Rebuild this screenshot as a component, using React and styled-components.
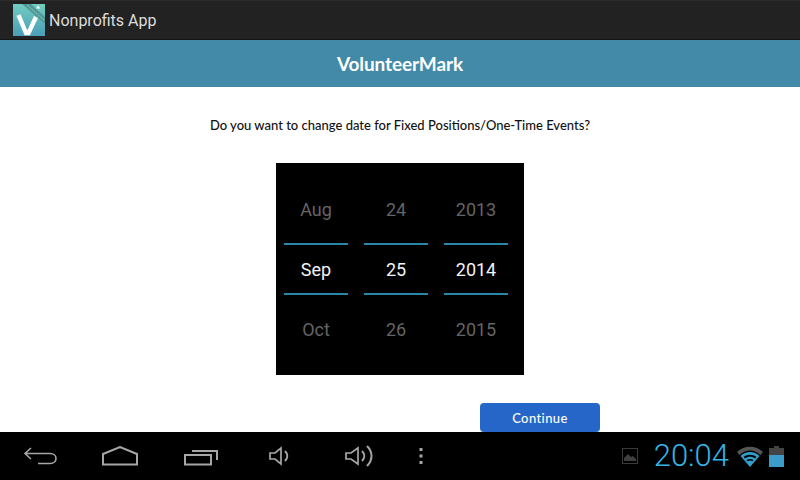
import React from "react";
import styled, { createGlobalStyle } from "styled-components";

const GlobalStyle = createGlobalStyle`
  html, body { margin: 0; padding: 0; background: #fff; }
  body { font-family: "Roboto", "Liberation Sans", sans-serif; }
`;

const Screen = styled.div`
  width: 800px;
  height: 480px;
  display: flex;
  flex-direction: column;
  overflow: hidden;
`;

const ActionBar = styled.div`
  height: 40px;
  box-sizing: border-box;
  background: #222222;
  border-top: 1px solid #2b2b2b;
  border-bottom: 1px solid #141414;
  padding-left: 13px;
  display: flex;
  align-items: center;
  gap: 4px;
  color: #dcdcdc;
  font-size: 16px;
`;

const Header = styled.div`
  height: 47px;
  background: #428aa8;
  color: #fff;
  font-family: "Lato", sans-serif;
  font-weight: 700;
  font-size: 19px;
  letter-spacing: -0.1px;
  display: flex;
  align-items: center;
  justify-content: center;
`;

const Content = styled.div`
  height: 345px;
  background: #fff;
  display: flex;
  flex-direction: column;
  align-items: center;
`;

const Question = styled.div`
  margin-top: 29px;
  height: 18px;
  line-height: 18px;
  color: #111;
  font-family: "Lato", sans-serif;
  font-weight: 500;
  font-size: 13px;
`;

const Picker = styled.div`
  margin-top: 29px;
  width: 248px;
  height: 212px;
  box-sizing: border-box;
  padding-right: 8px;
  background: #000;
  display: flex;
  justify-content: center;
  gap: 16px;
`;

const Column = styled.div`
  width: 64px;
  padding-top: 16px;
  display: flex;
  flex-direction: column;
`;

const Cell = styled.div`
  height: 60px;
  display: flex;
  align-items: center;
  justify-content: center;
  font-size: 18px;
  color: ${(p) => (p.$current ? "#f4f4f4" : "#646464")};
  ${(p) =>
    p.$current &&
    `
    height: 52px;
    margin: 4px 0;
    border-top: 2px solid #2a86ab;
    border-bottom: 2px solid #2a86ab;
    box-sizing: border-box;
  `}
`;

const ButtonRow = styled.div`
  margin-top: 28px;
  width: 100%;
  padding-left: 480px;
  box-sizing: border-box;
`;

const ContinueButton = styled.button`
  width: 120px;
  height: 29px;
  padding: 0;
  border: none;
  border-radius: 4px;
  background: #2566c8;
  color: #fff;
  font-family: "Lato", sans-serif;
  font-weight: 500;
  font-size: 13px;
  letter-spacing: 0.4px;
`;

const NavBar = styled.div`
  height: 48px;
  background: #000;
  display: flex;
  align-items: center;
  color: #a6a6a6;
`;

const NavIcon = styled.svg`
  flex: none;
  margin-left: ${(p) => p.$left}px;
  fill: none;
  stroke: currentColor;
  stroke-width: 2;
`;

const StatusArea = styled.div`
  margin-left: auto;
  display: flex;
  align-items: center;
  padding-right: 16px;
`;

const Clock = styled.div`
  margin-left: 16px;
  margin-right: 8px;
  font-size: 31px;
  font-weight: 300;
  color: #33b5e5;
  line-height: 48px;
`;

const WifiIcon = styled.svg`
  flex: none;
`;

const BatteryIcon = styled.svg`
  flex: none;
  margin-left: 6px;
`;

const AppLogo = () => (
  <svg width="32" height="32" viewBox="0 0 32 32">
    <defs>
      <linearGradient id="logoBg" x1="0" y1="0" x2="0" y2="1">
        <stop offset="0" stopColor="#72cdbf" />
        <stop offset="1" stopColor="#4a9db8" />
      </linearGradient>
    </defs>
    <rect width="32" height="32" fill="url(#logoBg)" />
    <path d="M9 0 L18 0 L32 13 L32 20 Z" fill="#4f9a97" />
    <path d="M14 1 L31 16" stroke="#cfeee8" strokeOpacity="0.6" strokeWidth="1" strokeDasharray="2 1" />
    <path d="M25 1.5 L27.5 4.5 L23 4.5 Z" fill="#fff" />
    <path d="M5.5 11 L13 29 L15.5 29 L23 13" fill="none" stroke="#fff" strokeWidth="4.4" />
  </svg>
);

const pickerColumns = [
  ["Aug", "Sep", "Oct"],
  ["24", "25", "26"],
  ["2013", "2014", "2015"],
];

export default function App() {
  return (
    <Screen>
      <GlobalStyle />
      <ActionBar>
        <AppLogo />
        <span>Nonprofits App</span>
      </ActionBar>
      <Header>VolunteerMark</Header>
      <Content>
        <Question>Do you want to change date for Fixed Positions/One-Time Events?</Question>
        <Picker>
          {pickerColumns.map((col) => (
            <Column key={col[1]}>
              {col.map((val, i) => (
                <Cell key={val} $current={i === 1}>
                  {val}
                </Cell>
              ))}
            </Column>
          ))}
        </Picker>
        <ButtonRow>
          <ContinueButton>Continue</ContinueButton>
        </ButtonRow>
      </Content>
      <NavBar>
        <NavIcon $left={23} width="34" height="20" viewBox="0 0 34 20">
          <path d="M8 2 L2 7.5 L8 13 M2 7.5 H27 C35 7.5 35 17.5 27 17.5 H15" strokeWidth="1.6" />
        </NavIcon>
        <NavIcon $left={45} width="36" height="20" viewBox="0 0 36 20">
          <path d="M1 8 L18 1 L35 8 V18.5 H1 Z" />
        </NavIcon>
        <NavIcon $left={46} width="34" height="20" viewBox="0 0 34 20">
          <path d="M1 9 H27 V18.5 H1 Z" />
          <path d="M8 5 H33 V14" />
        </NavIcon>
        <NavIcon $left={51} width="22" height="20" viewBox="0 0 22 20">
          <path d="M1 7 H6 L12 2 V18 L6 13 H1 Z" strokeWidth="1.7" />
          <path d="M16 5 C19 8 19 12 16 15" />
        </NavIcon>
        <NavIcon $left={54} width="30" height="24" viewBox="0 0 30 24">
          <path d="M1 9 H6 L13 4 V20 L6 15 H1 Z" strokeWidth="1.7" />
          <path d="M17 7 C20 10 20 14 17 17" />
          <path d="M22 2 C28 8 28 16 22 22" />
        </NavIcon>
        <NavIcon $left={44} width="4" height="16" viewBox="0 0 4 16">
          <path d="M0.5 1.5 H3.5 M0.5 8 H3.5 M0.5 14.5 H3.5" strokeWidth="3" />
        </NavIcon>
        <StatusArea>
          <svg width="16" height="16" viewBox="0 0 16 16">
            <rect x="0.5" y="0.5" width="15" height="15" fill="none" stroke="#3a3a3a" />
            <path d="M2 13 L2 10 L6 6 L9 9 L11 8 L14 11 V13 Z" fill="#3f3f3f" />
          </svg>
          <Clock>20:04</Clock>
          <WifiIcon width="26" height="21" viewBox="0 0 26 21">
            <path d="M0 6 C7 -1 19 -1 26 6 L23.5 9 C17 3 9 3 2.5 9 Z" fill="#555" />
            <path d="M3.5 10 C9 4.5 17 4.5 22.5 10 L13 21 Z" fill="#33a0cc" />
            <path d="M6.5 11 C10 8 16 8 19.5 11 L18 12.5 C15 10 11 10 8 12.5 Z" fill="#000" />
            <path d="M9.5 14 C11.5 12.6 14.5 12.6 16.5 14 L15.4 15.2 C14 14.3 12 14.3 10.6 15.2 Z" fill="#000" />
          </WifiIcon>
          <BatteryIcon width="15" height="21" viewBox="0 0 15 21">
            <path d="M5 0 H10 V2 H15 V9 H0 V2 H5 Z" fill="#444" />
            <rect y="9" width="15" height="12" fill="#3a9cc8" />
          </BatteryIcon>
        </StatusArea>
      </NavBar>
    </Screen>
  );
}
